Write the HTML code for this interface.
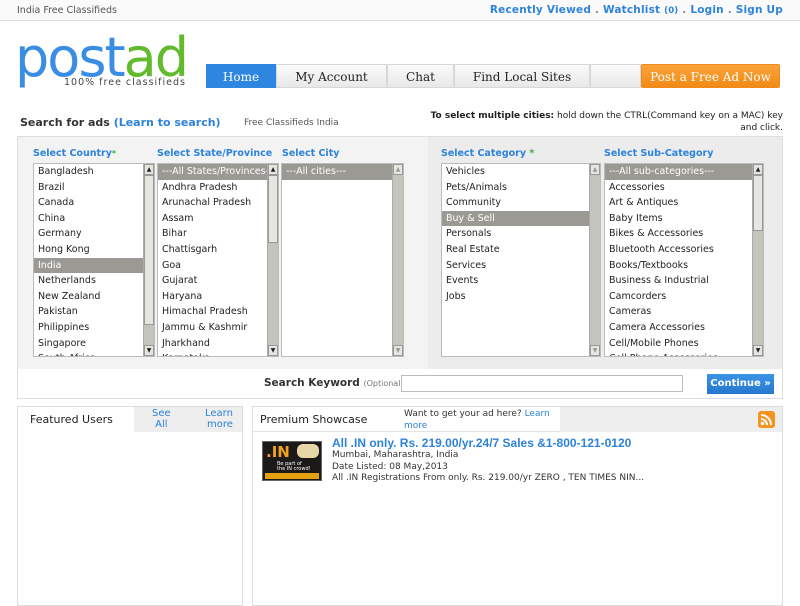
<!DOCTYPE html>
<html><head><meta charset="utf-8"><style>
*{margin:0;padding:0;box-sizing:border-box}
body{width:800px;height:600px;overflow:hidden;background:#fff;font-family:"DejaVu Sans","Liberation Sans",sans-serif;position:relative;color:#222}
.a{position:absolute;white-space:nowrap}
.blue{color:#2d83db}
.nav{position:absolute;top:64px;height:24px;font-family:"DejaVu Serif","Liberation Serif",serif;font-size:12px;text-align:center;line-height:24px;background:linear-gradient(#fafafa,#e8e8e8);border:1px solid #d8d8d8;color:#222}
.lab{position:absolute;top:148px;font-size:9.5px;font-weight:bold;color:#2d83db}
.list{position:absolute;top:163px;height:194px;background:#fff;border:1px solid #bbb;font-size:9.5px;overflow:hidden}
.list .i{height:15.6px;line-height:15.6px;padding-left:4px;white-space:nowrap}
.list .s{background:#9b9993;color:#fff}
.sb{position:absolute;right:0;top:0;width:11px;height:100%;background:#c4c3bc;border-left:1px solid #aaa}
.sb .up,.sb .dn{position:absolute;left:0;width:10px;height:11px;background:#e6e5e0;border:1px solid #999;font-size:6px;line-height:9px;text-align:center}
.sb .up{top:0}.sb .dn{bottom:0}
.sb .th{position:absolute;left:0;top:11px;width:10px;background:#e6e5e0;border:1px solid #999}
</style></head><body>
<div class="a" style="left:0;top:0;width:800px;height:21px;background:#fafafa;border-bottom:1px solid #ddd"></div>
<div class="a" style="left:17px;top:5px;font-size:9.5px;color:#555">India Free Classifieds</div>
<div class="a blue" style="right:17px;top:4px;font-size:10.5px;font-weight:bold;letter-spacing:0.2px">Recently Viewed <span style="color:#888">.</span> Watchlist <span style="font-size:8.5px">(0)</span> <span style="color:#888">.</span> Login <span style="color:#888">.</span> Sign Up</div>

<div class="a" style="left:15px;top:27px;font-family:'DejaVu Sans',sans-serif;font-size:54px;letter-spacing:-2px;line-height:62px"><span style="color:#3a8de4">post</span><span style="color:#62bb2c">ad</span></div>
<div class="a" style="left:62px;top:77px;font-size:9.5px;color:#444;letter-spacing:1px;background:#fff;padding:0 2px;line-height:11px">100% free classifieds</div>

<div class="nav" style="left:206px;width:70px;background:#2f86e0;color:#fff;border-color:#2f86e0">Home</div>
<div class="nav" style="left:276px;width:111px">My Account</div>
<div class="nav" style="left:387px;width:67px">Chat</div>
<div class="nav" style="left:454px;width:136px">Find Local Sites</div>
<div class="nav" style="left:590px;width:51px"></div>
<div class="nav" style="left:641px;width:139px;background:linear-gradient(#f9a43a,#f18a16);color:#fff;border-color:#f08a1a;border-radius:2px">Post a Free Ad Now</div>

<div class="a" style="left:20px;top:116px;font-size:11px;font-weight:bold;color:#333">Search for ads <span class="blue">(Learn to search)</span></div>
<div class="a" style="left:244px;top:118px;font-size:9px;color:#555">Free Classifieds India</div>
<div class="a" style="right:17px;top:110px;font-size:9px;text-align:right;line-height:12px;color:#222"><b>To select multiple cities:</b> hold down the CTRL(Command key on a MAC) key<br>and click.</div>

<div class="a" style="left:17px;top:136px;width:766px;height:263px;border:1px solid #ddd;background:#fff"></div>
<div class="a" style="left:18px;top:137px;width:410px;height:232px;background:#f3f3f3"></div>
<div class="a" style="left:428px;top:137px;width:354px;height:232px;background:#ececec"></div>

<div class="lab" style="left:33px">Select Country<span style="color:#4a4;font-size:8px">*</span></div>
<div class="lab" style="left:157px">Select State/Province</div>
<div class="lab" style="left:282px">Select City</div>
<div class="lab" style="left:441px">Select Category <span style="color:#4a4">*</span></div>
<div class="lab" style="left:604px">Select Sub-Category</div>

<div class="list" style="left:33px;width:122px"><div class="i">Bangladesh</div><div class="i">Brazil</div><div class="i">Canada</div><div class="i">China</div><div class="i">Germany</div><div class="i">Hong Kong</div><div class="i s" style="margin-right:11px">India</div><div class="i">Netherlands</div><div class="i">New Zealand</div><div class="i">Pakistan</div><div class="i">Philippines</div><div class="i">Singapore</div><div class="i">South Africa</div>
<div class="sb"><div class="up">▲</div><div class="th" style="height:150px"></div><div class="dn">▼</div></div></div>
<div class="list" style="left:157px;width:122px"><div class="i s" style="margin-right:11px">---All States/Provinces---</div><div class="i">Andhra Pradesh</div><div class="i">Arunachal Pradesh</div><div class="i">Assam</div><div class="i">Bihar</div><div class="i">Chattisgarh</div><div class="i">Goa</div><div class="i">Gujarat</div><div class="i">Haryana</div><div class="i">Himachal Pradesh</div><div class="i">Jammu &amp; Kashmir</div><div class="i">Jharkhand</div><div class="i">Karnataka</div>
<div class="sb"><div class="up">▲</div><div class="th" style="height:68px"></div><div class="dn">▼</div></div></div>
<div class="list" style="left:281px;width:123px"><div class="i s" style="margin-right:11px">---All cities---</div>
<div class="sb"><div class="up" style="color:#999">▲</div><div class="dn" style="color:#999">▼</div></div></div>
<div class="list" style="left:441px;width:160px"><div class="i">Vehicles</div><div class="i">Pets/Animals</div><div class="i">Community</div><div class="i s" style="margin-right:11px">Buy &amp; Sell</div><div class="i">Personals</div><div class="i">Real Estate</div><div class="i">Services</div><div class="i">Events</div><div class="i">Jobs</div>
<div class="sb"><div class="up" style="color:#999">▲</div><div class="dn" style="color:#999">▼</div></div></div>
<div class="list" style="left:604px;width:160px"><div class="i s" style="margin-right:11px">---All sub-categories---</div><div class="i">Accessories</div><div class="i">Art &amp; Antiques</div><div class="i">Baby Items</div><div class="i">Bikes &amp; Accessories</div><div class="i">Bluetooth Accessories</div><div class="i">Books/Textbooks</div><div class="i">Business &amp; Industrial</div><div class="i">Camcorders</div><div class="i">Cameras</div><div class="i">Camera Accessories</div><div class="i">Cell/Mobile Phones</div><div class="i">Cell Phone Accessories</div>
<div class="sb"><div class="up">▲</div><div class="th" style="height:56px"></div><div class="dn">▼</div></div></div>

<div class="a" style="left:264px;top:377px;font-size:10.5px;font-weight:bold;color:#333">Search Keyword <span style="font-size:8px;font-weight:normal;color:#777">(Optional)</span></div>
<div class="a" style="left:401px;top:375px;width:282px;height:17px;border:1px solid #bbb;background:#fff"></div>
<div class="a" style="left:707px;top:374px;width:67px;height:20px;background:linear-gradient(#3c94e6,#2478cf);color:#fff;font-size:10px;font-weight:bold;text-align:center;line-height:20px">Continue »</div>

<div class="a" style="left:17px;top:406px;width:226px;height:200px;border:1px solid #ddd;background:#fff"></div>
<div class="a" style="left:134px;top:407px;width:108px;height:25px;background:#eee"></div>
<div class="a" style="left:30px;top:413px;font-size:11px;color:#222">Featured Users</div>
<div class="a blue" style="left:152px;top:408px;font-size:10px;text-align:center;line-height:11px">See<br>All</div>
<div class="a blue" style="left:205px;top:408px;font-size:10px;text-align:right;line-height:11px">Learn<br>more</div>

<div class="a" style="left:252px;top:406px;width:531px;height:200px;border:1px solid #ddd;background:#fff"></div>
<div class="a" style="left:253px;top:407px;width:529px;height:25px;background:#eee"></div>
<div class="a" style="left:253px;top:407px;width:307px;height:25px;background:#fff;border-bottom:1px solid #e4e4e4"></div>
<div class="a" style="left:260px;top:413px;font-size:11px;color:#222">Premium Showcase</div>
<div class="a" style="left:404px;top:408px;font-size:9px;line-height:12px;color:#333">Want to get your ad here? <span class="blue">Learn</span><br><span class="blue">more</span></div>
<div class="a" style="left:758px;top:411px;width:17px;height:17px;background:#f6921e;border-radius:3px;overflow:hidden"><svg width="17" height="17"><circle cx="4.5" cy="12.5" r="1.8" fill="#fff"/><path d="M3 8a6 6 0 0 1 6 6M3 4a10 10 0 0 1 10 10" stroke="#fff" stroke-width="2" fill="none"/></svg></div>

<div class="a" style="left:262px;top:441px;width:60px;height:40px;background:#1c1a18;border:1px solid #666"><div style="position:absolute;left:3px;top:1px;color:#f3a21c;font-weight:bold;font-size:15px">.IN</div><div style="position:absolute;right:2px;top:2px;width:22px;height:14px;background:#e7d6a8;border-radius:6px"></div><div style="position:absolute;left:14px;top:20px;color:#fff;font-size:5px;line-height:5px">Be part of<br>the IN crowd!</div><div style="position:absolute;left:2px;top:31px;width:54px;height:6px;background:#e3a010"></div></div>
<div class="a blue" style="left:332px;top:436px;font-family:'Liberation Sans',sans-serif;font-size:12px;font-weight:bold">All .IN only. Rs. 219.00/yr.24/7 Sales &amp;1-800-121-0120</div>
<div class="a" style="left:332px;top:450px;font-size:9px;color:#333;line-height:11.5px">Mumbai, Maharashtra, India<br>Date Listed: 08 May,2013<br>All .IN Registrations From only. Rs. 219.00/yr ZERO , TEN TIMES NIN...</div>
</body></html>
